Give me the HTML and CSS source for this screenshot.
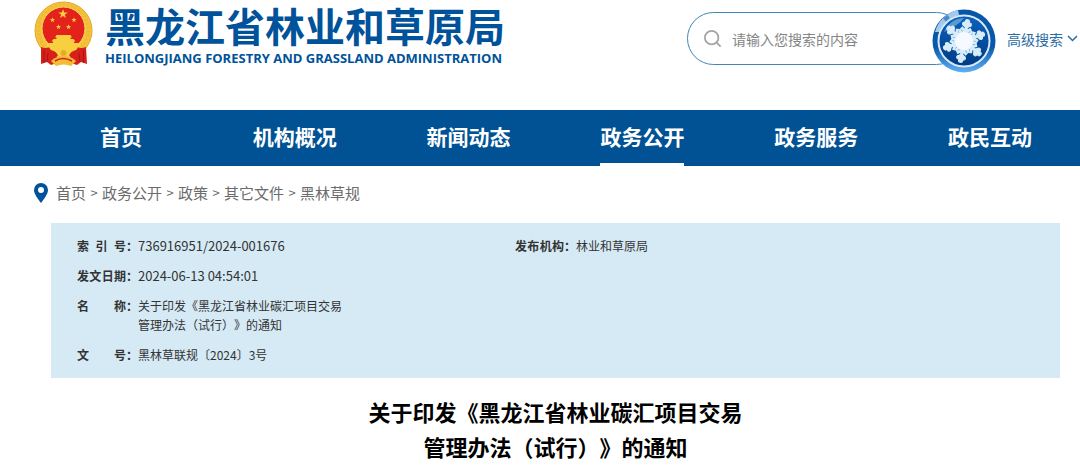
FILE: index.html
```html
<!DOCTYPE html>
<html lang="zh-CN">
<head>
<meta charset="utf-8">
<meta name="viewport" content="width=device-width, initial-scale=1">
<title>黑龙江省林业和草原局</title>
<link rel="stylesheet" href="styles.css">
</head>
<body>
<header class="header">
  <a class="brand" href="#">
    <svg class="emblem" viewBox="0 0 60 67" aria-hidden="true">
      <defs>
        <path id="star" d="M0-5 1.2-1.6 4.8-1.5 1.9.6 2.9 4 0 2-2.9 4-1.9.6-4.8-1.5-1.2-1.6Z"/>
      </defs>
      <circle cx="29.500" cy="30.500" r="28.500" fill="#f5c63c" stroke="#e3a52a"/>
      <circle cx="29.500" cy="30" r="25" fill="none" stroke="#efbc38" stroke-width="4" stroke-dasharray="3 1"/>
      <circle cx="29.500" cy="28.500" r="21.500" fill="#e3231b" stroke="#f9d75a"/>
      <g fill="#f8cf3f">
        <use href="#star" transform="translate(29 14)"/>
        <use href="#star" transform="translate(18.500 20) scale(.55)"/>
        <use href="#star" transform="translate(40 20) scale(.55)"/>
        <use href="#star" transform="translate(24.500 27) scale(.55)"/>
        <use href="#star" transform="translate(34.500 27) scale(.55)"/>
        <path d="M22.500 35h14l1.500 2.500H36.500V39h3l2 2.500H40V43h6v4H13v-4h6v-1.500h-1.500l2-2.500h3v-1.500H21Z"/>
      </g>
      <path d="M7 47q5 2 9 0 14 3 27 0 4 2 9 0l1 17-6-2-4 3-6-2H23l-6 2-4-3-6 2Z" fill="#d8201b"/>
      <path d="M10 50v13M49.500 50v13M14 53l-1 9M45 53l1 9" stroke="#a81414" fill="none"/>
      <path d="M15 47h29q-2 5-7 6l-1 4H23l-1-4q-5-1-7-6Z" fill="#f8cf3f"/>
      <path d="M16 51q6 1 7 5M43 51q-6 1-7 5" stroke="#d8201b" stroke-width="2" fill="none"/>
      <path d="M17 61q5-5 12.500-5T42 61l-5 5q-7-3-15 0Z" fill="#f3bd35"/>
      <path d="M21 61q8-5 17 0" stroke="#d8201b" stroke-width="1.500" fill="none"/>
      <circle cx="29.500" cy="53" r="3" fill="#e8aa2c"/>
    </svg>
    <span class="brand-text">
      <span class="brand-name">黑龙江省林业和草原局</span>
      <span class="brand-sub">HEILONGJIANG FORESTRY AND GRASSLAND ADMINISTRATION</span>
    </span>
  </a>
  <form class="search" role="search">
    <div class="search-box">
      <svg class="search-icon" viewBox="0 0 20 20" aria-hidden="true"><circle cx="8.500" cy="8.500" r="7.500"/><path d="m14 14 4.500 4.500"/></svg>
      <input class="search-input" type="text" aria-label="搜索" placeholder="请输入您搜索的内容">
    </div>
    <button class="search-button" type="submit" aria-label="搜索">
      <svg class="snow" viewBox="0 0 64 64" aria-hidden="true">
        <defs>
          <linearGradient id="rim" x2="0" y2="1"><stop offset="0" stop-color="#0757a8"/><stop offset=".6" stop-color="#0959ab"/><stop offset="1" stop-color="#61b0f5"/></linearGradient>
          <linearGradient id="disc" x2="0" y2="1"><stop offset="0" stop-color="#0a62bd"/><stop offset="1" stop-color="#003c83"/></linearGradient>
          <g id="arm"><path d="M0 0V-18M0-9l-5-4M0-9l5-4M0-14l-3-2.500M0-14l3-2.500" stroke-width="3"/><circle cy="-19.500" r="2.200"/><circle cx="-2.800" cy="-17" r="1.700"/><circle cx="2.800" cy="-17" r="1.700"/></g>
        </defs>
        <circle cx="32" cy="32" r="31.500" fill="url(#rim)"/>
        <path d="M3 23A31 31 0 0 1 26 1l1 5A26 26 0 0 0 8 23Z" fill="#a3c9ee"/>
        <path d="m11 9 5-3 2 4-4 3Z" fill="#4b8aca"/>
        <circle cx="32" cy="32" r="25.500" fill="url(#disc)" stroke="#d9e8f8" stroke-width="2"/>
        <path d="M12 23q7-14 20-14-5 7-20 14Z" fill="#5b99d5"/>
        <g fill="#d8edfc" stroke="#d8edfc" transform="rotate(10 32 32) translate(32 32)">
          <use href="#arm"/><use href="#arm" transform="rotate(60)"/><use href="#arm" transform="rotate(120)"/><use href="#arm" transform="rotate(180)"/><use href="#arm" transform="rotate(240)"/><use href="#arm" transform="rotate(300)"/>
          <path d="M0-13V13M-13 0H13M-11-6.500 11 6.500M-11 6.500 11-6.500M-6.500-11 6.500 11M-6.500 11 6.500-11" stroke-width="3"/>
          <circle r="9.500" fill="#f4faff"/>
        </g>
      </svg>
    </button>
    <a class="advanced" href="#">高级搜索
      <svg class="chevron" viewBox="0 0 11 7" aria-hidden="true"><path d="m1 1 4.500 4.500L10 1"/></svg>
    </a>
  </form>
</header>
<nav class="nav">
  <a class="nav-item" href="#"><span class="nav-label">首页</span></a>
  <a class="nav-item" href="#"><span class="nav-label">机构概况</span></a>
  <a class="nav-item" href="#"><span class="nav-label">新闻动态</span></a>
  <a class="nav-item" href="#" aria-current="page"><span class="nav-label current">政务公开</span></a>
  <a class="nav-item" href="#"><span class="nav-label">政务服务</span></a>
  <a class="nav-item" href="#"><span class="nav-label">政民互动</span></a>
</nav>
<div class="crumbs">
  <svg class="pin" viewBox="0 0 14 20" aria-hidden="true"><path d="M7 0a7 7 0 0 1 7 7c0 4-4 9-7 13C4 16 0 11 0 7a7 7 0 0 1 7-7Zm0 4a3 3 0 1 0 0 6 3 3 0 0 0 0-6Z"/></svg>
  <a href="#">首页</a><span class="sep">&gt;</span><a href="#">政务公开</a><span class="sep">&gt;</span><a href="#">政策</a><span class="sep">&gt;</span><a href="#">其它文件</a><span class="sep">&gt;</span><a href="#">黑林草规</a>
</div>
<main class="content">
  <dl class="info">
    <div class="field"><dt><span class="key">索 引 号</span>：</dt><dd class="number">736916951/2024-001676</dd></div>
    <div class="field"><dt><span class="key">发布机构</span>：</dt><dd>林业和草原局</dd></div>
    <div class="field wide"><dt><span class="key">发文日期</span>：</dt><dd class="number">2024-06-13 04:54:01</dd></div>
    <div class="field wide"><dt><span class="key">名 称</span>：</dt><dd>关于印发《黑龙江省林业碳汇项目交易<br>管理办法（试行）》的通知</dd></div>
    <div class="field wide"><dt><span class="key">文 号</span>：</dt><dd>黑林草联规〔2024〕3号</dd></div>
  </dl>
  <h1 class="title">关于印发《黑龙江省林业碳汇项目交易<br>管理办法（试行）》的通知</h1>
</main>
</body>
</html>
```
FILE: styles.css
```css
* { box-sizing: border-box; }
body {
  margin: 0;
  background: #fff;
  color: #333;
  font-family: "Noto Sans CJK SC", "Noto Sans", sans-serif;
  text-spacing-trim: space-all;
}
a { color: inherit; text-decoration: none; }

.header {
  display: flex;
  justify-content: space-between;
  align-items: flex-start;
  height: 110px;
  padding: 0 2px 0 34px;
}
.brand { display: flex; gap: 11px; color: #00529a; }
.emblem { width: 60px; height: 67px; }
.brand-text { display: flex; flex-direction: column; gap: 3px; padding-top: 3px; }
.brand-name { font-size: 40px; line-height: 44px; font-weight: 700; white-space: nowrap; }
.brand-sub {
  font: 700 13px/16px "Open Sans", "Noto Sans", sans-serif;
  white-space: nowrap;
}

.search { display: flex; align-items: center; padding-top: 9px; }
.search-box {
  display: flex;
  align-items: center;
  gap: 10px;
  width: 276px;
  height: 53px;
  margin: 0 -31px 5px 0;
  padding: 0 36px 0 16px;
  border: 1px solid #4285b5;
  border-radius: 27px;
}
.search-icon { flex: none; width: 18px; height: 18px; fill: none; stroke: #a5a5a5; stroke-width: 2; }
.search-input {
  flex: 1;
  min-width: 0;
  padding: 0;
  border: 0;
  outline: 0;
  background: none;
  font: 14px/20px "Noto Sans CJK SC", sans-serif;
}
.search-input::placeholder { color: #858585; opacity: 1; }
.search-button { z-index: 1; width: 64px; height: 64px; padding: 0; border: 0; border-radius: 50%; background: none; }
.snow { display: block; width: 64px; height: 64px; }
.advanced {
  display: flex;
  align-items: center;
  gap: 4px;
  margin: 0 0 5px 11px;
  color: #2a6ba4;
  font-size: 14px;
  line-height: 20px;
  white-space: nowrap;
}
.chevron { width: 11px; height: 7px; fill: none; stroke: currentColor; stroke-width: 1.5; }

.nav {
  display: grid;
  grid-template-columns: repeat(6, 1fr);
  height: 56px;
  padding: 0 3px 0 34px;
  background: #005294;
  color: #fff;
}
.nav-item { display: flex; justify-content: center; }
.nav-label { font-size: 21px; line-height: 53px; font-weight: 700; white-space: nowrap; }
.current { border-bottom: 3px solid #fff; }

.crumbs {
  display: flex;
  align-items: center;
  height: 57px;
  padding: 0 34px 3px;
  color: #6b6b6b;
  font-size: 15px;
  line-height: 22px;
}
.pin { width: 14px; height: 20px; margin-right: 8px; fill: #00529a; fill-rule: evenodd; }
.sep { width: 16px; font-size: 13px; text-align: center; }

.content { padding: 0 20px 0 51px; }
.info {
  display: grid;
  grid-template-columns: 438px 1fr;
  gap: 11px 0;
  margin: 0;
  padding: 13px 26px 14px;
  background: #d5eaf5;
  font-size: 12px;
  line-height: 19px;
}
.field { display: flex; }
.wide { grid-column: 1 / -1; }
.field dt { display: flex; width: 61px; font-weight: 700; }
.key { width: 49px; text-align-last: justify; }
.field dd { margin: 0; }
.number { font-size: 13px; }

.title {
  margin: 16px 0 0;
  color: #000;
  font-size: 22px;
  line-height: 35px;
  font-weight: 700;
  text-align: center;
}
```
